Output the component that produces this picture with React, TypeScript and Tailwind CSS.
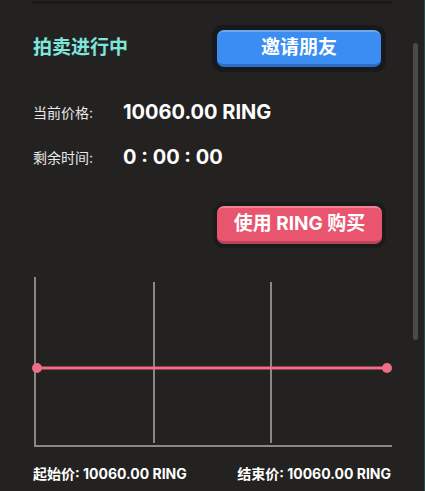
import React from "react";

const font = { fontFamily: 'Inter, "Noto Sans CJK SC", sans-serif' };

function PriceChart() {
  return (
    <svg width="360" height="172" viewBox="0 0 360 172" className="block">
      <g stroke="#8a8887" strokeWidth="2" fill="none">
        <line x1="3" y1="0" x2="3" y2="170" />
        <line x1="2" y1="169" x2="360" y2="169" />
        <line x1="122" y1="5" x2="122" y2="166" />
        <line x1="239" y1="5" x2="239" y2="166" />
      </g>
      <line x1="5" y1="91" x2="355" y2="91" stroke="#ef6d86" strokeWidth="3" />
      <circle cx="5" cy="91" r="5" fill="#ef6d86" />
      <circle cx="355" cy="91" r="5" fill="#ef6d86" />
    </svg>
  );
}

export default function App() {
  return (
    <div
      className="relative w-[425px] h-[491px] overflow-hidden bg-[#232221] border-r border-[#2c4a47] text-white"
      style={font}
    >
      <div className="mx-[32px] h-[3px] mt-[1px] bg-[#1a1918]" />

      {/* scrollbar thumb */}
      <div className="absolute right-[6px] top-[43px] w-[5px] h-[297px] rounded-full bg-[#4b4a49]" />

      <div className="px-[33px]">
        <div className="flex items-center justify-between mt-[21px]">
          <span className="text-[19px] font-bold text-[#7fe6de]">拍卖进行中</span>
          <div className="p-[5px] rounded-[11px] bg-[#18191c] mr-[5px]">
            <button className="w-[164px] h-[37px] rounded-[7px] bg-[#3b8df1] border-t-[2px] border-t-[#6ea9ee] border-b-[3px] border-b-[#2c6cc4] text-[19px] font-bold text-white">
              邀请朋友
            </button>
          </div>
        </div>

        <div className="flex items-center mt-[27px] h-[26px]">
          <span className="w-[90px] text-[14px] text-[#e8e8e8]">当前价格:</span>
          <span className="text-[20px] font-bold">10060.00 RING</span>
        </div>
        <div className="flex items-center mt-[19px] h-[26px]">
          <span className="w-[90px] text-[14px] text-[#e8e8e8]">剩余时间:</span>
          <span className="text-[20px] font-bold">0 : 00 : 00</span>
        </div>

        <div className="flex justify-end mt-[32px]">
          <div className="p-[4px] rounded-[11px] bg-[#1c1a1b] mr-[5px]">
            <button className="w-[165px] h-[38px] rounded-[7px] bg-[#e9546f] border-t-[2px] border-t-[#ee8394] border-b-[3px] border-b-[#b8445a] text-[19px] font-bold text-white">
              使用 RING 购买
            </button>
          </div>
        </div>

        <div className="mt-[29px] -ml-[1px]">
          <PriceChart />
        </div>

        <div className="flex justify-between mt-[14px] text-[14px] font-bold">
          <span>起始价: 10060.00 RING</span>
          <span>结束价: 10060.00 RING</span>
        </div>
      </div>
    </div>
  );
}
